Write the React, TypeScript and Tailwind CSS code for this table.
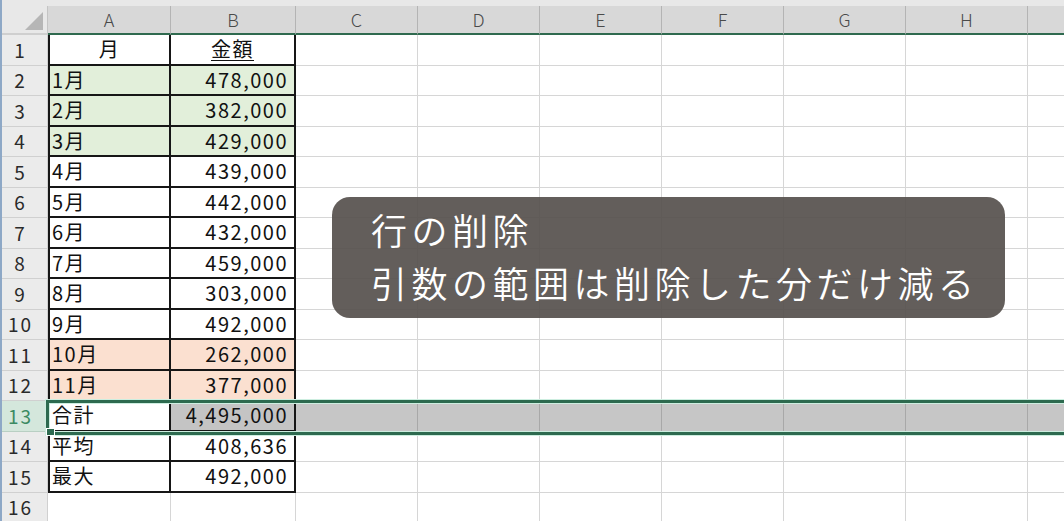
import React from "react";

type Row = {
  n: number;
  a?: string;
  b?: string;
  fill?: string;
  head?: boolean;
};

const rows: Row[] = [
  { n: 1, a: "月", b: "金額", head: true },
  { n: 2, a: "1月", b: "478,000", fill: "bg-[#e2efda]" },
  { n: 3, a: "2月", b: "382,000", fill: "bg-[#e2efda]" },
  { n: 4, a: "3月", b: "429,000", fill: "bg-[#e2efda]" },
  { n: 5, a: "4月", b: "439,000" },
  { n: 6, a: "5月", b: "442,000" },
  { n: 7, a: "6月", b: "432,000" },
  { n: 8, a: "7月", b: "459,000" },
  { n: 9, a: "8月", b: "303,000" },
  { n: 10, a: "9月", b: "492,000" },
  { n: 11, a: "10月", b: "262,000", fill: "bg-[#fbe0d0]" },
  { n: 12, a: "11月", b: "377,000", fill: "bg-[#fbe0d0]" },
  { n: 13, a: "合計", b: "4,495,000" },
  { n: 14, a: "平均", b: "408,636" },
  { n: 15, a: "最大", b: "492,000" },
  { n: 16 },
];

const cols = ["A", "B", "C", "D", "E", "F", "G", "H"];
const empty = ["C", "D", "E", "F", "G", "H"];

function SheetRow({ row }: { row: Row }) {
  const sel = row.n === 13;
  const inTable = row.n <= 15;
  return (
    <div className="flex h-[30.5px] shrink-0">
      <div
        className={`w-[46px] shrink-0 flex items-center justify-center pr-[8px] border-r border-b text-[19px] tracking-[2px] ${
          sel
            ? "bg-[#d4e7dc] text-[#3b8a62] border-[#b9cfc3]"
            : "bg-[#ebebeb] text-[#2a2a2a] border-[#d0d0d0]"
        }`}
      >
        {row.n}
      </div>
      {inTable ? (
        <>
          <div
            className={`w-[123px] shrink-0 flex items-center border-l-2 border-r-2 border-b-2 border-[#161616] text-[20px] tracking-[1.5px] text-[#111] ${
              row.head ? "justify-center" : "pl-[2px]"
            } ${row.fill ?? "bg-white"}`}
          >
            {row.a}
          </div>
          <div
            className={`w-[125px] shrink-0 flex items-center border-r-2 border-b-2 border-[#161616] text-[20px] tracking-[1.5px] text-[#111] ${
              row.head ? "justify-center" : "justify-end pr-[6px]"
            } ${sel ? "bg-[#c4c4c4]" : row.fill ?? "bg-white"}`}
          >
            {row.head ? (
              <span className="underline underline-offset-[3px] decoration-1">{row.b}</span>
            ) : (
              row.b
            )}
          </div>
        </>
      ) : (
        <>
          <div className="w-[123px] shrink-0 border-r border-b border-[#d6d6d6]" />
          <div className="w-[125px] shrink-0 border-r border-b border-[#d6d6d6]" />
        </>
      )}
      {empty.map((c) => (
        <div
          key={c}
          className={`w-[122px] shrink-0 border-r border-b ${
            sel ? "bg-[#c6c6c6] border-[#a8a8a8]" : "border-[#d6d6d6]"
          }`}
        />
      ))}
      <div
        className={`w-[40px] shrink-0 border-b ${
          sel ? "bg-[#c6c6c6] border-[#a8a8a8]" : "border-[#d6d6d6]"
        }`}
      />
    </div>
  );
}

export default function App() {
  return (
    <div className="relative w-[1064px] h-[521px] overflow-hidden bg-white flex font-['Noto_Sans_CJK_JP',sans-serif]">
      <div className="w-[2px] shrink-0 bg-[#8ea8c6]" />
      <div className="flex flex-col flex-1 min-w-0">
        <div className="h-[6px] shrink-0 bg-[#e8e8e8]" />
        <div className="flex h-[29px] shrink-0">
          <div className="w-[46px] shrink-0 bg-[#e8e8e8] border-r border-b-2 border-r-[#c4c4c4] border-b-[#cfcfcf] relative">
            <svg className="absolute left-[23px] top-[6px]" width="19" height="19" viewBox="0 0 19 19">
              <polygon points="0,18 18,18 18,0" fill="#b6b6b6" />
            </svg>
          </div>
          {cols.map((c, i) => (
            <div
              key={c}
              className={`${
                i === 0 ? "w-[123px]" : i === 1 ? "w-[125px]" : "w-[122px]"
              } shrink-0 flex items-center justify-center bg-[#d8d8d8] border-r border-r-[#b4b4b4] border-b-2 border-b-[#2f6a4f] text-[18px] font-light text-[#4a4a4a]`}
            >
              {c}
            </div>
          ))}
          <div className="w-[40px] shrink-0 bg-[#d8d8d8] border-b-2 border-b-[#2f6a4f]" />
        </div>
        {rows.map((r) => (
          <SheetRow key={r.n} row={r} />
        ))}
      </div>

      <div className="absolute left-[46px] top-[400px] right-[-4px] h-[35px] border-y-[3px] border-l-[3px] border-[#2d6a4f] shadow-[0_0_0_1px_#cdeee0,inset_0_0_0_1px_#cdeee0] pointer-events-none" />
      <div className="absolute left-[46px] top-[428px] w-[9px] h-[8px] bg-[#2d6a4f] border border-white" />

      <div className="absolute left-[332px] top-[197px] w-[673px] h-[121px] rounded-[18px] bg-[#57524f]/[0.93] pl-[39px] pt-[6px] text-white text-[36px] font-light tracking-[4.5px] leading-[53px] font-['Noto_Sans_CJK_JP_DemiLight','Noto_Sans_CJK_JP_Light','Noto_Sans_CJK_JP',sans-serif]">
        <div>行の削除</div>
        <div>引数の範囲は削除した分だけ減る</div>
      </div>
    </div>
  );
}
